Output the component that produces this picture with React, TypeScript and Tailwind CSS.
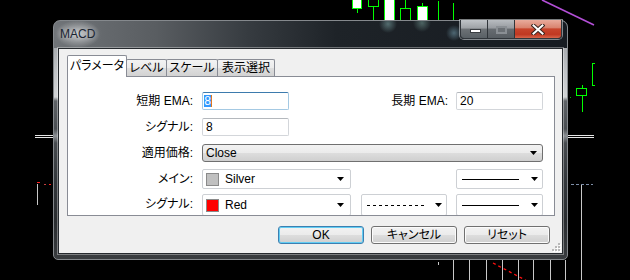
import React from "react";

const FONT =
  "font-['Liberation_Sans','Noto_Sans_CJK_JP',sans-serif] [font-feature-settings:'palt'] text-[12px] leading-[14px] text-black";

function Arrow() {
  return (
    <svg width="7" height="4" viewBox="0 0 7 4" className="shrink-0">
      <path d="M0 0H7L3.5 4Z" fill="#000" />
    </svg>
  );
}

function Chart() {
  return (
    <svg
      className="absolute inset-0"
      width="630"
      height="280"
      viewBox="0 0 630 280"
      shapeRendering="crispEdges"
    >
      <rect width="630" height="280" fill="#000" />
      <g stroke="#00ff00" strokeWidth="1">
        <line x1="357.5" y1="8" x2="357.5" y2="13" />
        <rect x="352.5" y="-1" width="9" height="9" fill="#fff" />
        <line x1="373.5" y1="6" x2="373.5" y2="20" />
        <rect x="368.5" y="-1" width="10" height="7" fill="#000" />
        <rect x="384.5" y="-1" width="10" height="21" fill="#fff" />
        <line x1="405.5" y1="0" x2="405.5" y2="8" />
        <rect x="400.5" y="8.5" width="10" height="12" fill="#000" />
        <line x1="422.5" y1="3" x2="422.5" y2="6" />
        <rect x="417.5" y="6.5" width="10" height="14" fill="#fff" />
        <line x1="438.5" y1="1" x2="438.5" y2="20" />
        <line x1="453.5" y1="3" x2="453.5" y2="20" />
        <path d="M594.5 63.5H592.5V85.5H594.5" fill="none" />
        <line x1="582.5" y1="85" x2="582.5" y2="112" />
        <rect x="576.5" y="88.5" width="10" height="7" fill="#000" />
      </g>
      <rect x="570" y="97" width="1" height="1" fill="#00aa00" />
      <line
        x1="542"
        y1="0"
        x2="594"
        y2="25"
        stroke="#b44fd8"
        strokeWidth="1.6"
        shapeRendering="auto"
      />
      <g stroke="#e6e6e6" strokeWidth="1">
        <line x1="35" y1="135.5" x2="53" y2="135.5" />
        <line x1="35" y1="137.5" x2="53" y2="137.5" />
        <line x1="568" y1="135.5" x2="594" y2="135.5" />
        <line x1="568" y1="137.5" x2="594" y2="137.5" />
      </g>
      <line
        x1="571"
        y1="184.5"
        x2="593"
        y2="184.5"
        stroke="#7d8ea8"
        strokeDasharray="3 2"
      />
      <g stroke="#c8c8c8" strokeWidth="1">
        <line x1="581.5" y1="185" x2="581.5" y2="280" />
        <line x1="565.5" y1="260" x2="565.5" y2="280" />
        <line x1="37.5" y1="184" x2="37.5" y2="205" />
        <line x1="438.5" y1="262" x2="438.5" y2="265" />
        <line x1="453.5" y1="260" x2="453.5" y2="280" />
        <line x1="469.5" y1="260" x2="469.5" y2="280" />
        <line x1="486.5" y1="260" x2="486.5" y2="280" />
        <line x1="502.5" y1="260" x2="502.5" y2="280" />
        <line x1="518.5" y1="260" x2="518.5" y2="280" />
        <line x1="533.5" y1="260" x2="533.5" y2="280" />
        <line x1="550.5" y1="260" x2="550.5" y2="280" />
      </g>
      <rect x="37" y="182" width="3" height="1" fill="#ff2020" />
      <rect x="44" y="184" width="2" height="1" fill="#c04040" />
      <rect x="49" y="184" width="2" height="1" fill="#ff2020" />
      <line
        x1="493"
        y1="263"
        x2="527"
        y2="281"
        stroke="#ff1010"
        strokeWidth="1.3"
        strokeDasharray="3 3"
        shapeRendering="auto"
      />
    </svg>
  );
}

function TextBox({ value, focused }: { value: string; focused?: boolean }) {
  if (focused) {
    return (
      <div className="w-[87px] h-[18px] shrink-0 rounded-[2px] border border-[#a4c9e3] border-t-[#3d7bad] bg-white flex items-center pl-[1px]">
        <span className="w-[7px] h-[12px] bg-[#3399ff] text-white text-center leading-[12px]">
          {value}
        </span>
        <span className="w-px h-[12px] bg-[#e07a1f]" />
      </div>
    );
  }
  return (
    <div className="w-[87px] h-[18px] shrink-0 rounded-[2px] border border-[#d3d6da] border-t-[#b4b8bd] bg-white flex items-center pl-[3px]">
      {value}
    </div>
  );
}

function ColorSelect({ color, name }: { color: string; name: string }) {
  return (
    <div className="w-[149px] h-[20px] shrink-0 rounded-[2px] border border-[#cdd0d4] bg-white flex items-center pl-[3px] pr-[6px]">
      <div
        className={`w-[13px] h-[13px] shrink-0 border border-[#8a8a8a] ${color}`}
      />
      <span className="ml-[6px] flex-1">{name}</span>
      <Arrow />
    </div>
  );
}

function LineSelect({ dashed }: { dashed?: boolean }) {
  return (
    <div
      className={`${dashed ? "w-[86px]" : "w-[87px]"} h-[20px] shrink-0 rounded-[2px] border border-[#cdd0d4] bg-white flex items-center pl-[5px] pr-[4px]`}
    >
      <svg width="58" height="3" viewBox="0 0 58 3" className="shrink-0">
        <line
          x1="0"
          y1="1.5"
          x2="57"
          y2="1.5"
          stroke="#000"
          strokeWidth="1"
          strokeDasharray={dashed ? "3 3" : undefined}
          shapeRendering="crispEdges"
        />
      </svg>
      <span className="flex-1" />
      <Arrow />
    </div>
  );
}

function Label({ w, children }: { w: string; children: React.ReactNode }) {
  return <div className={`${w} shrink-0 text-right whitespace-nowrap`}>{children}</div>;
}

function Btn({ children, def }: { children: React.ReactNode; def?: boolean }) {
  return (
    <div
      className={`w-[86px] h-[18px] rounded-[3px] border ${
        def
          ? "border-[#3c7fb1] shadow-[inset_0_0_0_1px_#62cdf3]"
          : "border-[#707070] shadow-[inset_0_0_0_1px_#fbfbfb]"
      } bg-[linear-gradient(to_bottom,#f2f2f2_0%,#ebebeb_50%,#dddddd_51%,#cfcfcf_100%)] flex items-center justify-center`}
    >
      {children}
    </div>
  );
}

function Tab({
  w,
  children,
  active,
}: {
  w: string;
  children: React.ReactNode;
  active?: boolean;
}) {
  if (active) {
    return (
      <div
        className={`${w} h-[22px] -mb-px relative z-10 bg-white border border-b-0 border-[#898c95] rounded-t-[2px] flex items-center justify-center pb-[2px]`}
      >
        {children}
      </div>
    );
  }
  return (
    <div
      className={`${w} h-[17px] -ml-px border border-b-0 border-[#898c95] rounded-t-[2px] bg-[linear-gradient(to_bottom,#f3f3f3_0%,#ebebeb_50%,#dedede_51%,#d2d2d2_100%)] flex items-center justify-center`}
    >
      {children}
    </div>
  );
}

function CaptionButtons() {
  return (
    <div className="absolute right-[5px] top-[-1px] flex h-[19px] rounded-b-[4px] border border-t-0 border-[#30353a] overflow-hidden shadow-[0_0_0_1px_rgba(220,225,230,0.55)]">
      <div className="w-[27px] border-r border-[#30353a] bg-[linear-gradient(to_bottom,#c0c4c8_0%,#9ea2a6_45%,#6d7276_50%,#596065_100%)] flex items-end justify-center pb-[5px] pl-[2px]">
        <div className="w-[11px] h-[4px] bg-white border border-[#3a3e42]" />
      </div>
      <div className="w-[27px] border-r border-[#30353a] bg-[linear-gradient(to_bottom,#b8bcc0_0%,#979ba0_45%,#676c71_50%,#575d62_100%)] flex items-center justify-center">
        <div className="w-[11px] h-[8px] border-2 border-[#8a8f94] bg-[#6b7075] mt-[1px]" />
      </div>
      <div className="w-[46px] bg-[linear-gradient(to_bottom,#e9ab9c_0%,#d98470_42%,#c8442c_50%,#c03822_80%,#d8644a_100%)] flex items-center justify-center">
        <svg width="14" height="11" viewBox="0 0 14 11">
          <path
            d="M2.5 1.5L11.5 9.5M11.5 1.5L2.5 9.5"
            stroke="#3b2620"
            strokeWidth="4"
            strokeLinecap="square"
          />
          <path
            d="M2.5 1.5L11.5 9.5M11.5 1.5L2.5 9.5"
            stroke="#fff"
            strokeWidth="2"
            strokeLinecap="square"
          />
        </svg>
      </div>
    </div>
  );
}

function Grip() {
  const dots = [
    [6, 0],
    [3, 3],
    [6, 3],
    [0, 6],
    [3, 6],
    [6, 6],
  ];
  return (
    <svg
      width="9"
      height="9"
      viewBox="0 0 9 9"
      className="absolute right-[1px] bottom-[1px]"
      shapeRendering="crispEdges"
    >
      {dots.map(([x, y], i) => (
        <g key={i}>
          <rect x={x + 1} y={y + 1} width="2" height="2" fill="#ffffff" />
          <rect x={x} y={y} width="2" height="2" fill="#b8b8b8" />
        </g>
      ))}
    </svg>
  );
}

export default function App() {
  return (
    <div className={`relative w-[630px] h-[280px] overflow-hidden bg-black ${FONT}`}>
      <Chart />
      <div className="absolute left-[53px] top-[20px] w-[515px] h-[240px] rounded-t-[7px] rounded-b-[5px] border border-[#85898d] flex flex-col bg-[linear-gradient(to_bottom,#8e9296_0px,#c0c3c6_50px,#d2d4d6_76px,#5f6367_80px,#4a4e52_108px,#8d9195_115px,#474b4f_122px,#33373b_160px,#2a2d30_200px,#3a3d40_240px)]">
        <div className="relative h-[27px] shrink-0 rounded-t-[6px] flex items-center pl-[6px] pb-[2px] bg-[radial-gradient(ellipse_22px_14px_at_24px_13px,rgba(200,202,204,0.9),transparent),radial-gradient(circle_at_334px_3px,rgba(150,200,200,0.45),transparent_9px),radial-gradient(circle_at_368px_2px,rgba(150,200,190,0.4),transparent_9px),radial-gradient(circle_at_400px_12px,rgba(140,190,210,0.45),transparent_8px),linear-gradient(to_right,#707478_0%,#595d61_20%,#363b40_38%,#1e2328_55%,#161b21_100%)]">
          <span className="font-['Liberation_Sans',sans-serif] text-[12px] text-[#1b2532] [text-shadow:0_0_6px_rgba(255,255,255,0.7)]">
            MACD
          </span>
          <CaptionButtons />
        </div>
        <div className="relative ml-[4px] w-[505px] h-[206px] shrink-0 border border-[#262a2e] bg-[#f0f0f0] shadow-[0_0_0_1px_rgba(255,255,255,0.35)] flex flex-col pt-[6px]">
          <div className="flex items-end h-[21px] pl-[8px]">
            <Tab w="w-[60px]" active>
              パラメータ
            </Tab>
            <Tab w="w-[41px]">レベル</Tab>
            <Tab w="w-[52px]">スケール</Tab>
            <Tab w="w-[58px]">表示選択</Tab>
          </div>
          <div className="ml-[8px] w-[488px] h-[140px] shrink-0 bg-white border border-[#898c95] overflow-hidden pt-[15px] flex flex-col">
            <div className="flex items-center h-[18px]">
              <Label w="w-[125px]">短期 EMA:</Label>
              <div className="ml-[9px]">
                <TextBox value="8" focused />
              </div>
              <Label w="w-[159px]">長期 EMA:</Label>
              <div className="ml-[8px]">
                <TextBox value="20" />
              </div>
            </div>
            <div className="flex items-center h-[18px] mt-[8px]">
              <Label w="w-[125px]">シグナル:</Label>
              <div className="ml-[9px]">
                <TextBox value="8" />
              </div>
            </div>
            <div className="flex items-center h-[18px] mt-[8px]">
              <Label w="w-[125px]">適用価格:</Label>
              <div className="ml-[9px] w-[341px] h-[18px] rounded-[3px] border border-[#707070] bg-[linear-gradient(to_bottom,#f2f2f2_0%,#ebebeb_50%,#dddddd_51%,#cfcfcf_100%)] flex items-center pl-[3px] pr-[5px]">
                <span className="flex-1">Close</span>
                <Arrow />
              </div>
            </div>
            <div className="flex items-center h-[20px] mt-[7px]">
              <Label w="w-[125px]">メイン:</Label>
              <div className="ml-[9px]">
                <ColorSelect color="bg-[#c0c0c0]" name="Silver" />
              </div>
              <div className="ml-[105px]">
                <LineSelect />
              </div>
            </div>
            <div className="flex items-start h-[22px] mt-[5px] shrink-0">
              <Label w="w-[125px] pt-[3px]">シグナル:</Label>
              <div className="ml-[9px] h-[22px] [&>div]:h-[22px]">
                <ColorSelect color="bg-[#ff0000]" name="Red" />
              </div>
              <div className="ml-[10px] [&>div]:h-[22px]">
                <LineSelect dashed />
              </div>
              <div className="ml-[9px] [&>div]:h-[22px]">
                <LineSelect />
              </div>
            </div>
          </div>
          <div className="flex gap-[7px] ml-[219px] mt-[10px]">
            <Btn def>OK</Btn>
            <Btn>キャンセル</Btn>
            <Btn>リセット</Btn>
          </div>
          <Grip />
        </div>
      </div>
    </div>
  );
}
